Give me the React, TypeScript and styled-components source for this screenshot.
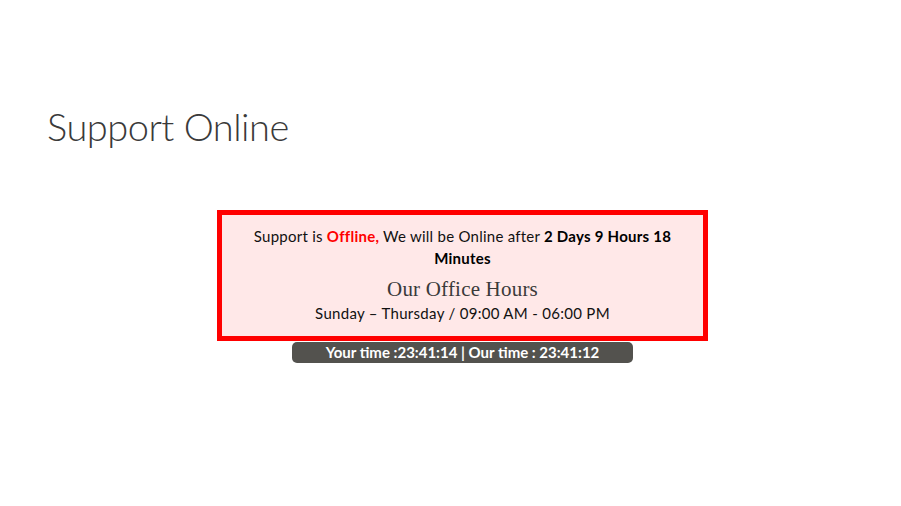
import React from 'react';
import styled, { createGlobalStyle } from 'styled-components';

const GlobalStyle = createGlobalStyle`
  body {
    margin: 0;
    background: #ffffff;
    font-family: 'Lato', 'Liberation Sans', sans-serif;
  }
`;

// Page area, offset so the notice sits at the same centre as the original
const Page = styled.main`
  padding: 97px 23px 0 47px;
`;

const Title = styled.h1`
  margin: 0 0 55px;
  font-family: 'Lato', 'Open Sans', sans-serif;
  font-weight: 300;
  font-size: 38px;
  letter-spacing: -0.5px;
  line-height: 58px;
  color: #3a3a3a;
`;

const Notice = styled.div`
  display: flex;
  flex-direction: column;
  align-items: center;
`;

const Box = styled.div`
  box-sizing: border-box;
  width: 491px;
  padding: 10px 16px 12px;
  border: 5px solid #ff0000;
  background: #ffe8e8;
  text-align: center;
  color: #111111;
`;

const Status = styled.p`
  margin: 0;
  font-size: 15px;
  letter-spacing: 0.25px;
  line-height: 22px;
`;

const Accent = styled.strong<{ $red?: boolean }>`
  font-weight: 700;
  color: ${(p) => (p.$red ? '#ff0000' : '#000000')};
`;

const HoursTitle = styled.h3`
  margin: 8px 0 1px;
  font-family: 'Liberation Serif', 'DejaVu Serif', serif;
  font-weight: 400;
  font-size: 21px;
  letter-spacing: 0.2px;
  line-height: 24px;
  color: #3a3a3a;
`;

const HoursLine = styled.p`
  margin: 0;
  font-size: 15px;
  letter-spacing: 0.3px;
  line-height: 22px;
`;

const TimeBar = styled.div`
  margin-top: 1px;
  width: 341px;
  height: 21px;
  border-radius: 5px;
  background: #53524e;
  color: #ffffff;
  font-weight: 700;
  font-size: 15px;
  line-height: 21px;
  text-align: center;
`;

const App: React.FC = () => (
  <>
    <GlobalStyle />
    <Page>
      <Title>Support Online</Title>
      <Notice>
        <Box>
          <Status>
            Support is <Accent $red>Offline,</Accent> We will be Online after{' '}
            <Accent>2 Days 9 Hours 18 Minutes</Accent>
          </Status>
          <HoursTitle>Our Office Hours</HoursTitle>
          <HoursLine>Sunday – Thursday / 09:00 AM - 06:00 PM</HoursLine>
        </Box>
        <TimeBar>Your time :23:41:14 | Our time : 23:41:12</TimeBar>
      </Notice>
    </Page>
  </>
);

export default App;
